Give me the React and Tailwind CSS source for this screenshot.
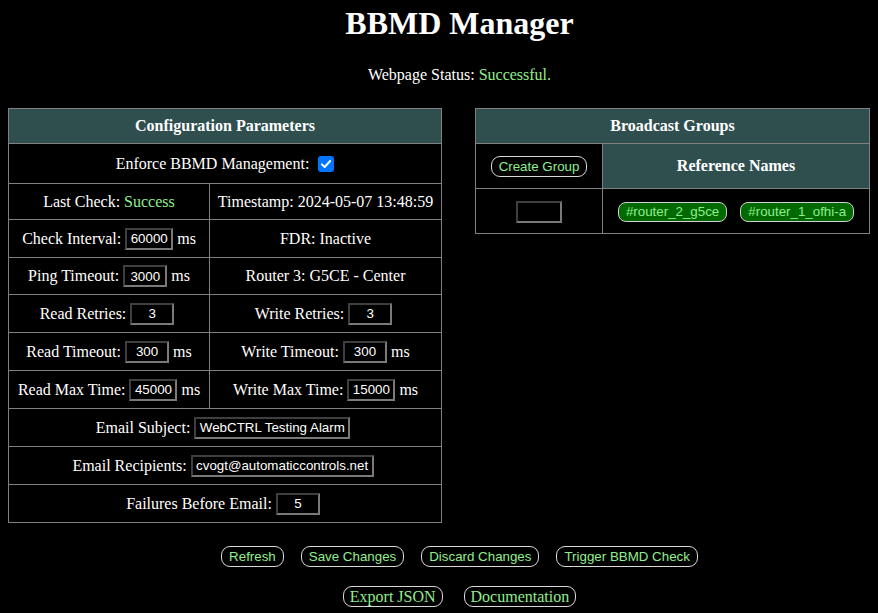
import React from 'react';

const sans = "font-['Liberation_Sans',Arial,sans-serif]";
const inputCls = `${sans} h-[22px] bg-black text-white text-[13.33px] text-center border-2 border-solid border-t-[#3f3f3f] border-l-[#3f3f3f] border-b-[#7a7a7a] border-r-[#7a7a7a] outline-none px-[2px] mx-[4px]`;
const btnCls = `${sans} h-[21px] px-[7px] bg-black text-[#90ee90] text-[13.33px] leading-[19px] border border-[#d8d8d8] rounded-[9px]`;
const tagCls = `${sans} h-[20px] px-[7px] bg-[#006a00] text-[#90ee90] text-[13.33px] leading-[18px] border border-[#d0d0d0] rounded-[8px]`;
const cell = 'border border-[#808080] text-center align-middle p-0';

function Field({ label, value, width = 'w-[44px]', unit }) {
  return (
    <span className="inline-flex items-center justify-center">
      <span>{label}</span>
      <input className={`${inputCls} ${width}`} defaultValue={value} />
      {unit && <span>{unit}</span>}
    </span>
  );
}

function CheckBox() {
  return (
    <span className="inline-flex w-4 h-4 ml-[9px] rounded-[3px] bg-[#0075ff] items-center justify-center">
      <svg viewBox="0 0 16 16" className="w-[12px] h-[12px]">
        <path d="M2.5 8.5 L6.2 12 L13.5 4" fill="none" stroke="white" strokeWidth="2.6" strokeLinecap="round" strokeLinejoin="round" />
      </svg>
    </span>
  );
}

export default function App() {
  return (
    <div className="min-h-screen bg-black text-white font-['Liberation_Serif','Times_New_Roman',serif] text-[16px]">
      <h1 className="text-[32px] font-bold text-center leading-[37px] pt-[5px] pl-[41px]">BBMD Manager</h1>
      <p className="text-center mt-[24px] leading-[18px] pl-[41px]">
        Webpage Status: <span className="text-[#90ee90]">Successful.</span>
      </p>

      <div className="flex justify-center items-start gap-[33px] mt-[24px]">
        {/* Configuration */}
        <table className="border-collapse w-[434px]">
          <tbody>
            <tr className="h-[35px]">
              <th colSpan={2} className={`${cell} bg-[#2f4f4f] font-bold`}>Configuration Parameters</th>
            </tr>
            <tr className="h-[40px]">
              <td colSpan={2} className={cell}>
                <span className="inline-flex items-center">Enforce BBMD Management:<CheckBox /></span>
              </td>
            </tr>
            <tr className="h-[36px]">
              <td className={`${cell} w-[201px]`}>Last Check: <span className="text-[#90ee90]">Success</span></td>
              <td className={cell}>Timestamp: 2024-05-07 13:48:59</td>
            </tr>
            <tr className="h-[38px]">
              <td className={cell}><Field label="Check Interval:" value="60000" width="w-[48px]" unit="ms" /></td>
              <td className={cell}>FDR: Inactive</td>
            </tr>
            <tr className="h-[37px]">
              <td className={cell}><Field label="Ping Timeout:" value="3000" unit="ms" /></td>
              <td className={cell}>Router 3: G5CE - Center</td>
            </tr>
            <tr className="h-[38px]">
              <td className={cell}><Field label="Read Retries:" value="3" /></td>
              <td className={cell}><Field label="Write Retries:" value="3" /></td>
            </tr>
            <tr className="h-[38px]">
              <td className={cell}><Field label="Read Timeout:" value="300" unit="ms" /></td>
              <td className={cell}><Field label="Write Timeout:" value="300" unit="ms" /></td>
            </tr>
            <tr className="h-[38px]">
              <td className={cell}><Field label="Read Max Time:" value="45000" width="w-[48px]" unit="ms" /></td>
              <td className={cell}><Field label="Write Max Time:" value="15000" width="w-[48px]" unit="ms" /></td>
            </tr>
            <tr className="h-[38px]">
              <td colSpan={2} className={cell}><Field label="Email Subject:" value="WebCTRL Testing Alarm" width="w-[156px]" /></td>
            </tr>
            <tr className="h-[38px]">
              <td colSpan={2} className={cell}><Field label="Email Recipients:" value="cvogt@automaticcontrols.net" width="w-[183px]" /></td>
            </tr>
            <tr className="h-[38px]">
              <td colSpan={2} className={cell}><Field label="Failures Before Email:" value="5" /></td>
            </tr>
          </tbody>
        </table>

        {/* Broadcast groups */}
        <table className="border-collapse w-[395px]">
          <tbody>
            <tr className="h-[35px]">
              <th colSpan={2} className={`${cell} bg-[#2f4f4f] font-bold`}>Broadcast Groups</th>
            </tr>
            <tr className="h-[45px]">
              <td className={`${cell} w-[127px]`}>
                <button className={btnCls}>Create Group</button>
              </td>
              <th className={`${cell} bg-[#2f4f4f] font-bold`}>Reference Names</th>
            </tr>
            <tr className="h-[45px]">
              <td className={cell}>
                <input className={`${inputCls} w-[46px] h-[20px]`} defaultValue="" />
              </td>
              <td className={cell}>
                <span className="inline-flex gap-[13px] items-center">
                  <span className={tagCls}>#router_2_g5ce</span>
                  <span className={tagCls}>#router_1_ofhi-a</span>
                </span>
              </td>
            </tr>
          </tbody>
        </table>
      </div>

      <div className="flex justify-center gap-[17px] mt-[23px] pl-[41px]">
        <button className={btnCls}>Refresh</button>
        <button className={btnCls}>Save Changes</button>
        <button className={btnCls}>Discard Changes</button>
        <button className={btnCls}>Trigger BBMD Check</button>
      </div>
      <div className="flex justify-center gap-[21px] mt-[19px] pl-[41px]">
        <a className="h-[21px] px-[6px] text-[#90ee90] text-[16px] leading-[19px] border border-[#d8d8d8] rounded-[9px]">Export JSON</a>
        <a className="h-[21px] px-[6px] text-[#90ee90] text-[16px] leading-[19px] border border-[#d8d8d8] rounded-[9px]">Documentation</a>
      </div>
    </div>
  );
}
